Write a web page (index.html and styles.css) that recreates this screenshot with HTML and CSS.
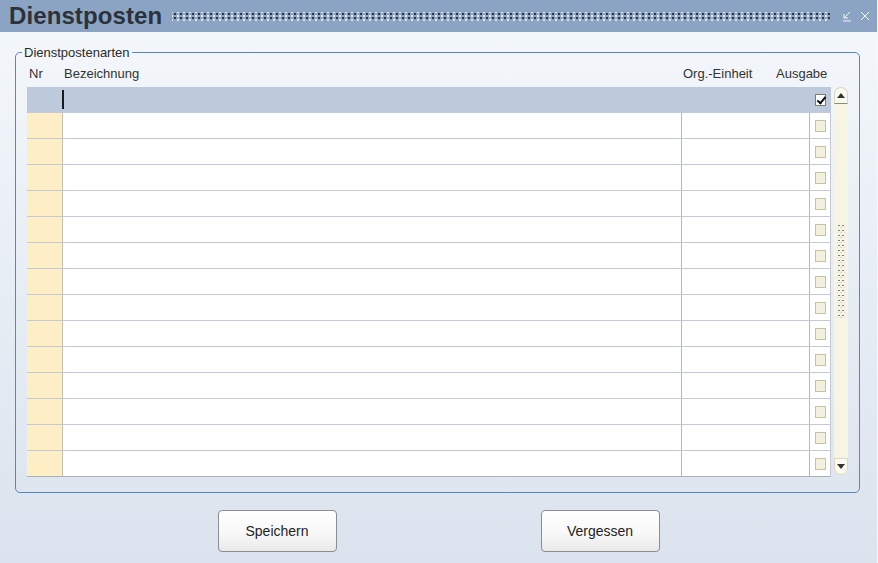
FILE: index.html
```html
<!DOCTYPE html>
<html lang="de">
<head>
    <meta charset="UTF-8">
    <title>Dienstposten</title>
    <link rel="stylesheet" href="styles.css">
</head>
<body>

<div class="window">
    <div class="titlebar">
        <h1>Dienstposten</h1>
        <div class="grip"></div>
        <div class="win-icons">
            <svg width="12" height="12" viewBox="0 0 12 12"><path d="M9 2 L3 8 M3 4 V8 H7 M2 11 H10" stroke="#f4f7fb" stroke-width="1" fill="none"/></svg>
            <svg width="12" height="12" viewBox="0 0 12 12"><path d="M2 2 L10 10 M10 2 L2 10" stroke="#f4f7fb" stroke-width="1" fill="none"/></svg>
        </div>
    </div>

    <div class="content">
        <fieldset class="group">
            <legend>Dienstpostenarten</legend>
            <div class="headers">
                <span class="h-nr">Nr</span>
                <span class="h-bez">Bezeichnung</span>
                <span class="h-org">Org.-Einheit</span>
                <span class="h-aus">Ausgabe</span>
            </div>
            <div class="grid-wrap">
                <div class="grid" id="grid"></div>
                <div class="scrollbar">
                    <div class="sb-btn sb-up"><svg width="8" height="5" viewBox="0 0 8 5"><path d="M0 5 L4 0 L8 5 Z" fill="#333"/></svg></div>
                    <div class="sb-track"><div class="sb-thumb"></div></div>
                    <div class="sb-btn sb-down"><svg width="8" height="5" viewBox="0 0 8 5"><path d="M0 0 L8 0 L4 5 Z" fill="#333"/></svg></div>
                </div>
            </div>
        </fieldset>

        <div class="buttons">
            <button type="button">Speichern</button>
            <button type="button">Vergessen</button>
        </div>
    </div>
</div>

<script>
    const grid = document.getElementById('grid');
    for (let i = 0; i < 15; i++) {
        const row = document.createElement('div');
        row.className = i === 0 ? 'row selected' : 'row';
        row.innerHTML =
            '<div class="cell nr"></div>' +
            '<div class="cell bez">' + (i === 0 ? '<span class="caret"></span>' : '') + '</div>' +
            '<div class="cell org"></div>' +
            '<div class="cell chk"><span class="box' + (i === 0 ? ' checked' : '') + '"></span></div>';
        grid.appendChild(row);
    }
</script>

</body>
</html>
```

FILE: styles.css
```css
body {
    margin: 0;
    font-family: "Liberation Sans", Arial, sans-serif;
    font-size: 13px;
    color: #222;
    background: #f2f6fb;
}

.window {
    width: 877px;
    height: 563px;
    display: flex;
    flex-direction: column;
    border-right: 1px solid #f4f7fb;
}

.titlebar {
    height: 32px;
    background: #8ba4c3;
    display: flex;
    align-items: center;
    padding: 0 6px 0 9px;
}

.titlebar h1 {
    margin: 0;
    font-size: 24px;
    font-weight: bold;
    color: #2d3139;
    letter-spacing: 0.1px;
}

.grip {
    flex: 1;
    height: 9px;
    margin: 1px 10px 0 10px;
    background-image:
        radial-gradient(circle, #2f3540 0.7px, transparent 1.1px),
        radial-gradient(circle, #e3e9f1 0.7px, transparent 1.1px);
    background-size: 6px 4px;
    background-position: 0 0, 3px 2px;
}

.win-icons {
    display: flex;
    gap: 6px;
}

.content {
    flex: 1;
    background: linear-gradient(#f3f7fb, #dbe3ee);
    padding-top: 13px;
}

.group {
    margin: 0 17px 0 15px;
    padding: 0 10px 15px 6px;
    border: 1px solid #5b84c4;
    border-radius: 5px;
}

.group legend {
    padding: 0 2px;
    line-height: 15px;
    color: #2a2a2a;
}

.headers {
    display: flex;
    height: 15px;
    line-height: 15px;
    margin: 6px 0 6px 5px;
    color: #333;
}

.h-nr { width: 35px; padding-left: 2px; }
.h-bez { width: 619px; }
.h-org { width: 93px; }
.h-aus { width: 60px; }

.grid-wrap {
    display: flex;
    margin-left: 5px;
}

.grid {
    width: 804px;
    border-bottom: 1px solid #a9aeb8;
}

.row {
    display: flex;
    height: 25px;
    border-bottom: 1px solid #c3c9d6;
}

.row:last-child {
    border-bottom: none;
}

.cell {
    height: 25px;
    border-right: 1px solid #b4b8c0;
    background: #fff;
    position: relative;
}

.cell.nr { width: 35px; background: #fdeec6; border-right-color: #c4bfae; }
.cell.bez { width: 618px; }
.cell.org { width: 127px; }
.cell.chk {
    width: 20px;
    display: flex;
    align-items: center;
    justify-content: center;
    border-right-color: #c3c9d6;
}

.row.selected .cell {
    background: #bdcadb;
    border-right-color: #bdcadb;
}

.caret {
    position: absolute;
    left: -1px;
    top: 3px;
    width: 2px;
    height: 19px;
    background: #1a1a1a;
}

.box {
    box-sizing: border-box;
    width: 11px;
    height: 12px;
    border: 1px solid #c8c29e;
    background: #f2f0de;
}

.box.checked {
    background: #fff;
    border-color: #7c7a6a;
    position: relative;
}

.box.checked::after {
    content: "";
    position: absolute;
    left: 3px;
    top: 0px;
    width: 3px;
    height: 7px;
    border: solid #111;
    border-width: 0 2px 2px 0;
    transform: rotate(40deg);
}

.scrollbar {
    width: 14px;
    margin-left: 3px;
    height: 388px;
    display: flex;
    flex-direction: column;
    background: #f6f4e3;
    border-radius: 7px;
}

.sb-btn {
    height: 15px;
    display: flex;
    align-items: center;
    justify-content: center;
    border: 1px solid #dcd8bd;
    border-radius: 7px;
    background: #fbfaf0;
}

.sb-up { border-bottom: 1px solid #8c8a7c; border-radius: 7px 7px 0 0; }
.sb-down { border-radius: 0 0 7px 7px; }

.sb-track {
    flex: 1;
    display: flex;
    align-items: center;
    justify-content: center;
}

.sb-thumb {
    width: 8px;
    height: 96px;
    margin-top: -20px;
    background-image:
        radial-gradient(circle, #7d8186 0.6px, transparent 1px),
        radial-gradient(circle, #d4d6da 0.6px, transparent 1px);
    background-size: 4px 5px;
    background-position: 0 0, 2px 2px;
}

.buttons {
    display: flex;
    justify-content: center;
    gap: 204px;
    margin-top: 17px;
}

.buttons button {
    width: 119px;
    height: 42px;
    font-family: "Liberation Sans", Arial, sans-serif;
    font-size: 14px;
    color: #222;
    background: linear-gradient(#ffffff, #f8f8f8 55%, #e9e9e9);
    border: 1px solid #8a8d92;
    border-radius: 4px;
}
```
